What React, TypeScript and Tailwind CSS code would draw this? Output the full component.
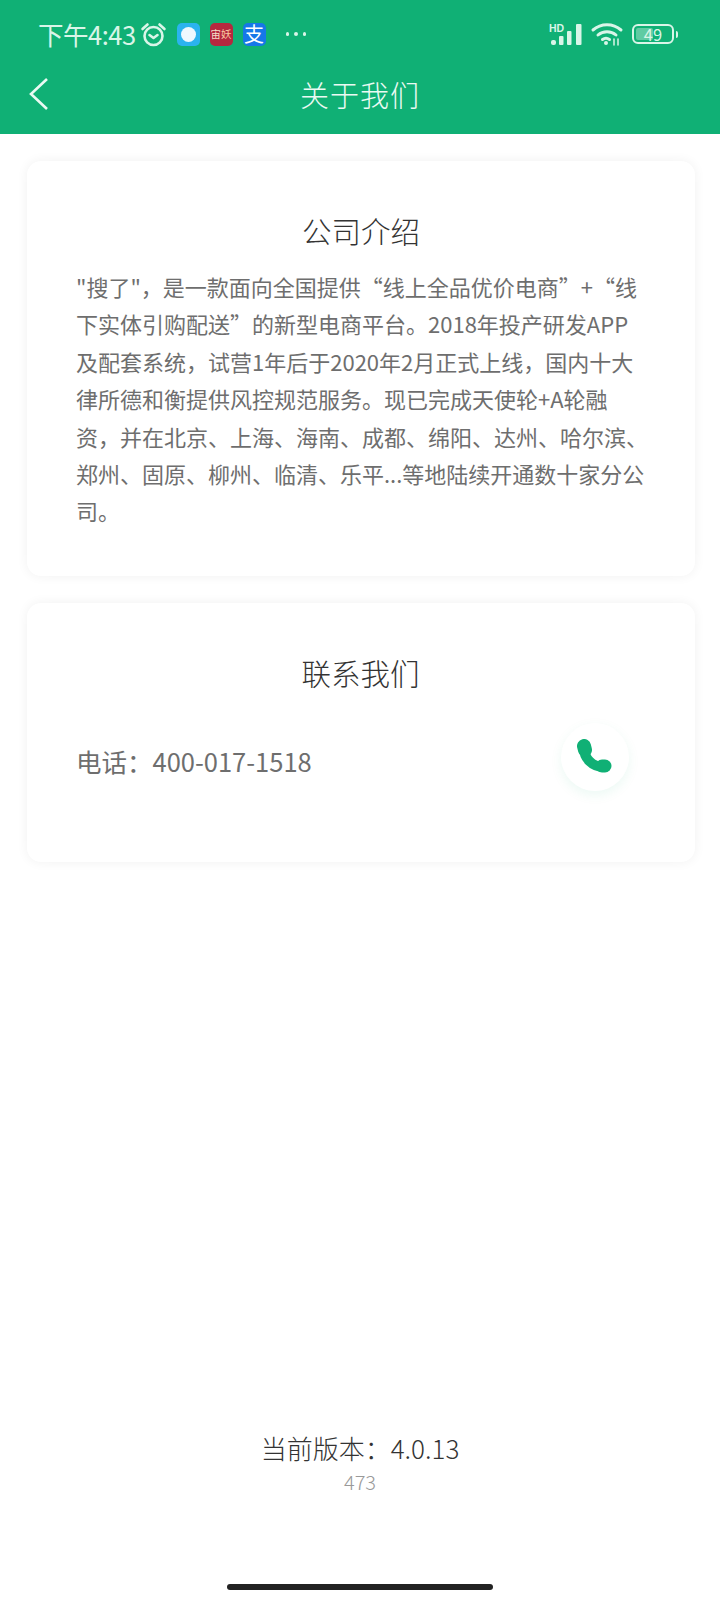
const font = { fontFamily: '"Noto Sans CJK SC", "Noto Sans", sans-serif' };

const intro = [
  '"搜了"，是一款面向全国提供“线上全品优价电商”+“线',
  "下实体引购配送”的新型电商平台。2018年投产研发APP",
  "及配套系统，试营1年后于2020年2月正式上线，国内十大",
  "律所德和衡提供风控规范服务。现已完成天使轮+A轮融",
  "资，并在北京、上海、海南、成都、绵阳、达州、哈尔滨、",
  "郑州、固原、柳州、临清、乐平...等地陆续开通数十家分公",
  "司。",
];

function StatusBar() {
  return (
    <div className="flex h-[70px] items-center justify-between pb-0.5 pl-[38px] pr-[42px] text-[#d9f5e8]">
      <div className="flex items-center">
        <span className="text-[25.500px] leading-none tracking-[-0.5px]">下午4:43</span>
        <svg width="27" height="27" viewBox="0 0 27 27" fill="none" stroke="currentColor" strokeWidth="2.600" className="ml-[4px]">
          <circle cx="13.500" cy="15" r="9" />
          <path d="M9.500 14l4 3 4-3" strokeLinecap="round" strokeLinejoin="round" />
          <path d="M2.500 8l5-4.500M24.500 8l-5-4.500" strokeLinecap="round" />
        </svg>
        <div className="ml-[10px] flex h-[23px] w-[23px] items-center justify-center rounded-[5px] bg-[#2bb3ee]">
          <div className="h-[15px] w-[15px] rounded-full bg-[#eef8fe]" />
        </div>
        <div className="ml-[10px] flex h-[23px] w-[23px] items-center justify-center rounded-[5px] bg-[#b5283f] text-[10.500px] leading-none text-[#f6dcc8]">
          宙<span className="text-[#f8c9a0]">妖</span>
        </div>
        <div className="ml-[10px] flex h-[23px] w-[23px] items-center justify-center rounded-[5px] bg-[#1677e8] text-[20px] leading-none text-white">
          支
        </div>
        <div className="ml-[20px] flex gap-[5px]">
          <div className="h-[3.500px] w-[3.500px] rounded-full bg-[#d9f5e8]" />
          <div className="h-[3.500px] w-[3.500px] rounded-full bg-[#d9f5e8]" />
          <div className="h-[3.500px] w-[3.500px] rounded-full bg-[#d9f5e8]" />
        </div>
      </div>
      <div className="flex items-center">
        <svg width="35" height="22" viewBox="0 0 35 22" fill="currentColor">
          <text x="0" y="8.500" fontSize="10.500" fontWeight="700" fontFamily="Liberation Sans">HD</text>
          <rect x="2" y="17" width="5" height="5" rx="2" />
          <rect x="10" y="13" width="4.500" height="9" rx="1" />
          <rect x="18" y="8" width="4.500" height="14" rx="1" />
          <rect x="27" y="1" width="5.500" height="21" rx="1" />
        </svg>
        <svg width="34" height="24" viewBox="0 0 32 24" fill="none" stroke="currentColor" strokeWidth="3" strokeLinecap="round" className="ml-[6px]">
          <path d="M2 8c8-7 20-7 28 0" />
          <path d="M7 13c5-4.500 13-4.500 18 0" />
          <path d="M11.500 17.500c2-1.500 5-1.500 7 0" />
          <circle cx="15" cy="21" r="2" fill="currentColor" stroke="none" />
          <path d="M23 17v6M27 17v6" strokeWidth="1.500" />
        </svg>
        <div className="relative ml-[8px] flex h-[20px] w-[42px] items-center justify-center rounded-[6px] border-2 border-[#d9f5e8]">
          <div className="absolute inset-y-[2px] left-[2px] w-[17px] rounded-[2px] bg-[#d9f5e8]/40" />
          <span className="relative text-[16.500px] leading-[16px]">49</span>
        </div>
        <div className="ml-[2px] h-[7px] w-[2px] rounded-r-sm bg-[#d9f5e8]" />
      </div>
    </div>
  );
}

export default function App() {
  return (
    <div className="flex h-[1600px] flex-col bg-white" style={font}>
      <header className="h-[134px] bg-[#10b075]">
        <StatusBar />
        <div className="relative flex h-[48px] items-center justify-center text-[#eafaf3]">
          <svg width="22" height="34" viewBox="0 0 22 34" fill="none" stroke="currentColor" strokeWidth="2.600" className="absolute left-[28px] top-[7px]">
            <path d="M19 2L3 17l16 15" />
          </svg>
          <h1 className="text-[29px] font-light leading-none tracking-[1px]">关于我们</h1>
        </div>
      </header>

      <main className="flex flex-1 flex-col pl-[27px] pr-[25px] pt-[27px]">
        {/* 公司介绍 */}
        <section className="h-[415px] rounded-[14px] bg-white pl-[49px] pr-[40px] pt-[49px] shadow-[0_0_12px_rgba(0,0,0,0.06)]">
          <h2 className="pr-[9px] text-center text-[29.500px] font-light leading-[40px] text-[#333333]">公司介绍</h2>
          <p className="mt-[18px] whitespace-nowrap text-[22px] leading-[37.400px] text-[#6e6e6e]">
            {intro.map((line) => (
              <span key={line} className="block">{line}</span>
            ))}
          </p>
        </section>

        {/* 联系我们 */}
        <section className="mt-[27px] h-[259px] rounded-[14px] bg-white pl-[49px] pr-[50px] pt-[49px] shadow-[0_0_12px_rgba(0,0,0,0.06)]">
          <h2 className="text-center text-[29.500px] font-light leading-[40px] text-[#333333]">联系我们</h2>
          <div className="mt-[31px] flex items-center justify-between">
            <span className="mt-[8px] text-[25.500px] leading-[40px] text-[#6e6e6e]">电话：400-017-1518</span>
            <div className="mr-[16px] flex h-[68px] w-[68px] items-center justify-center rounded-full bg-white shadow-[0_4px_12px_rgba(16,176,117,0.08)]">
              <svg width="36" height="36" viewBox="0 0 36 36" fill="none" stroke="#10b075" strokeLinecap="round" className="-translate-x-[1px]">
                <path d="M8 9c0 10 8 19 20 19" strokeWidth="10" />
                <path d="M8 7l1 4" strokeWidth="14" />
                <path d="M29 27l-3 0" strokeWidth="13" />
              </svg>
            </div>
          </div>
        </section>

        <div className="mt-auto flex flex-col items-center pb-[89px] pr-[2px]">
          <p className="mb-[3px] text-[26px] font-light leading-[36px] text-[#333333]">当前版本：4.0.13</p>
          <p className="text-[20px] font-light leading-[26px] text-[#999999]">473</p>
        </div>
      </main>

      <div className="mx-auto mb-[10px] h-[6px] w-[266px] rounded-full bg-[#222222]" />
    </div>
  );
}
